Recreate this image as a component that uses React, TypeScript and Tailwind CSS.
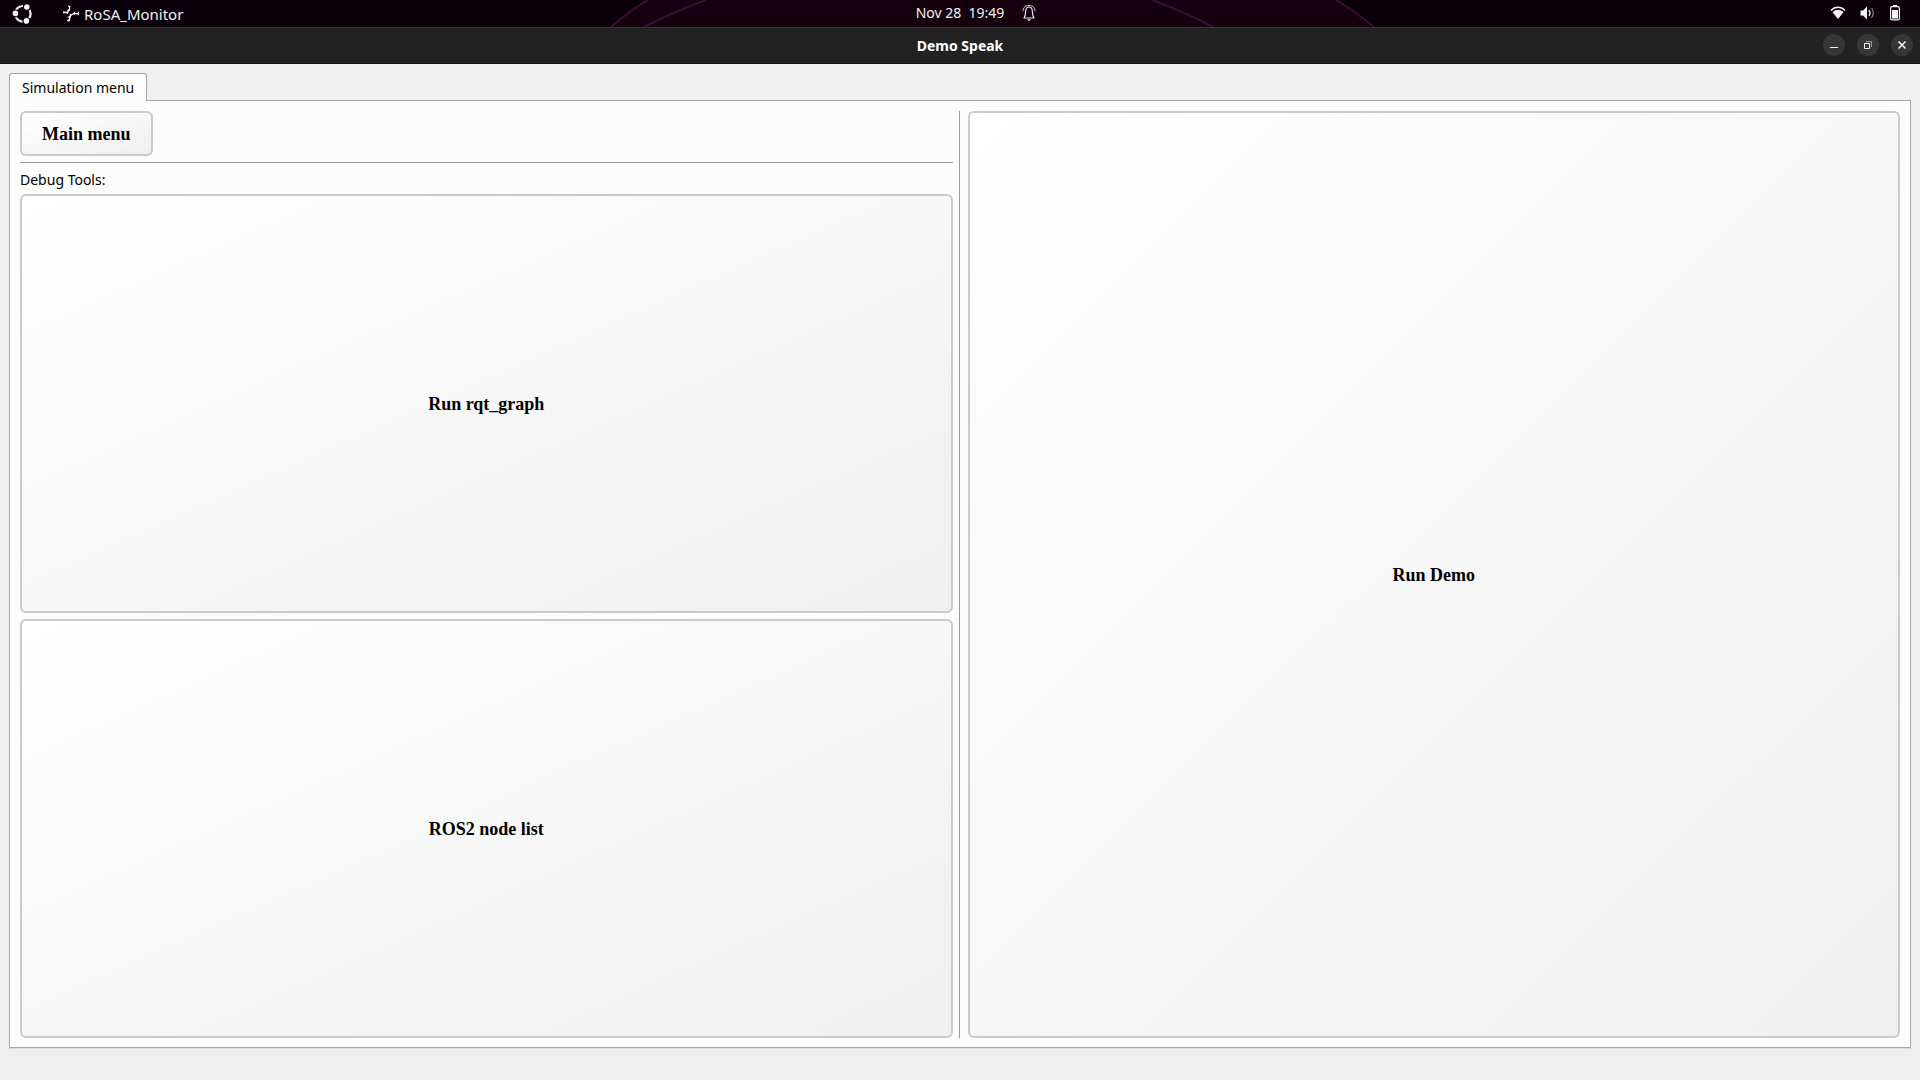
import React from "react";

const UI_FONT = "font-['Noto_Sans',sans-serif]";
const BUTTON =
  "rounded-md border-2 border-[#cacaca] bg-linear-to-br from-white to-[#efefef] font-['Liberation_Serif',serif] text-lg leading-6 font-bold text-black";

function UbuntuLogo() {
  return (
    <svg width="22" height="22" viewBox="0 0 22 22" fill="none" aria-hidden="true">
      <circle cx="10.8" cy="10.8" r="7.8" stroke="#f2f2f2" strokeWidth="2.2" />
      <g fill="#f2f2f2" stroke="#0b0009" strokeWidth="1.2">
        <circle cx="3.4" cy="10.4" r="3.4" />
        <circle cx="14.8" cy="4" r="3.4" />
        <circle cx="14.4" cy="17.9" r="3.4" />
      </g>
    </svg>
  );
}

function MonitorIcon() {
  return (
    <svg width="18" height="18" viewBox="0 0 18 18" fill="none" stroke="#f2f2f2" strokeWidth="1.3" aria-hidden="true">
      <path d="M7.5 1.3V4L6.5 5.3 5.8 7.5 2 7.3M6.5 15.3 7.7 14V12L9.2 9.8 12.2 8.4 16 8.6" />
      <path d="M6.2 1.3H8.4M1.8 6.2V8.4M5 15.7H8M16.3 6.8V10.2" />
      <path d="M5.4 5.4H8M5.6 12.2H9M12.4 6.8V9.8M5.2 6.6V9M8.4 9V11.6" />
    </svg>
  );
}

function BellIcon() {
  return (
    <svg width="14" height="18" viewBox="0 0 14 18" fill="none" stroke="#e8e8e8" aria-hidden="true">
      <path d="M1.5 14H12.5M2 13.8C3.3 12.3 3.5 10.5 3.6 7.7C3.7 4.3 4.7 3 7 3S10.3 4.3 10.4 7.7C10.5 10.5 10.7 12.3 12 13.8" strokeWidth="1.2" />
      <path d="M5 1.7C2.5 2.3 1 4.3 1 7.2M9 1.7C11.5 2.3 13 4.3 13 7.2M5.5 1.5H8.5" strokeWidth="0.9" />
      <path d="M5 15.2H9L7 17.2Z" fill="#e8e8e8" stroke="none" />
    </svg>
  );
}

function WifiIcon() {
  return (
    <svg width="16" height="14" viewBox="0 0 16 14" aria-hidden="true">
      <path d="M1 4.5C5 .3 11 .3 15 4.5" stroke="#f2f2f2" strokeWidth="1.5" fill="none" />
      <path d="M2.5 6.3C5.8 3 10.2 3 13.5 6.3L8 13Z" fill="#f2f2f2" />
    </svg>
  );
}

function VolumeIcon() {
  return (
    <svg width="16" height="14" viewBox="0 0 16 14" fill="none" strokeWidth="1.3" aria-hidden="true">
      <path d="M.5 4.5H3L7 .5V13.5L3 9.5H.5Z" fill="#f2f2f2" />
      <path d="M9 4.2Q11 7 9 9.8" stroke="#f2f2f2" />
      <path d="M11.5 2.2Q15 7 11.5 11.8" stroke="#777" />
    </svg>
  );
}

function BatteryIcon() {
  return (
    <svg width="10" height="16" viewBox="0 0 10 16" aria-hidden="true">
      <path d="M3 0H7V2H3Z" fill="#f2f2f2" />
      <rect x=".6" y="1.7" width="8.8" height="13.2" rx="1.5" fill="none" stroke="#f2f2f2" strokeWidth="1.2" />
      <path d="M2 5H8V13.5H2Z" fill="#f2f2f2" />
    </svg>
  );
}

function WallpaperArcs() {
  return (
    <svg className="absolute left-1/2 top-0 -translate-x-1/2" width="800" height="27" viewBox="560 0 800 27" fill="none" overflow="visible" aria-hidden="true">
      <path d="M648 0Q628 12 611 27H1373Q1354 12 1336 0Z" fill="#14000f" />
      <path d="M648 0Q628 12 611 27M706 0Q673 12 644 27M1152 0Q1185 12 1213 27M1336 0Q1356 12 1374 27" stroke="#3a1036" strokeWidth="2" />
    </svg>
  );
}

function TopBar() {
  return (
    <header className="relative grid h-[27px] grid-cols-[1fr_auto_1fr] items-center overflow-hidden bg-[#0b0009] text-sm text-[#f2f2f2]">
      <WallpaperArcs />
      <div className="relative flex items-center pl-3">
        <button type="button" aria-label="Activities">
          <UbuntuLogo />
        </button>
        <button type="button" className="ml-7 flex items-center gap-1">
          <MonitorIcon />
          <span className="text-[15px] leading-5">RoSA_Monitor</span>
        </button>
      </div>
      <button type="button" className="relative flex items-center gap-[18px] pb-px pl-8">
        <span className="whitespace-pre">Nov 28&nbsp; 19:49</span>
        <BellIcon />
      </button>
      <div className="relative flex items-center justify-end gap-3.5 pr-5 pb-0.5">
        <WifiIcon />
        <VolumeIcon />
        <BatteryIcon />
      </div>
    </header>
  );
}

function WindowButton({ label, children }: { label: string; children: React.ReactNode }) {
  return (
    <button type="button" aria-label={label} className="flex size-[22px] items-center justify-center rounded-full bg-[#373737]">
      <svg width="10" height="10" viewBox="0 0 10 10" fill="none" stroke="#f5f5f5" aria-hidden="true">
        {children}
      </svg>
    </button>
  );
}

function TitleBar() {
  return (
    <div className="grid h-[37px] grid-cols-[1fr_auto_1fr] items-center border-t border-b border-t-[#343434] border-b-[#151515] bg-[#222222] text-white">
      <h1 className="col-start-2 text-sm font-bold">Demo Speak</h1>
      <div className="flex justify-end gap-3 pr-[7px] pb-px">
        <WindowButton label="Minimize">
          <path d="M1 7.5H9" />
        </WindowButton>
        <WindowButton label="Restore">
          <path d="M1.5 3.5H6.5V8.5H1.5Z" />
          <path d="M3 1.5H8.5V7" stroke="#999" />
        </WindowButton>
        <WindowButton label="Close">
          <path d="M1.5 1.5 8.5 8.5M8.5 1.5 1.5 8.5" strokeWidth="1.5" />
        </WindowButton>
      </div>
    </div>
  );
}

export default function App() {
  return (
    <div className={`flex min-h-screen flex-col bg-[#efefef] ${UI_FONT}`}>
      <TopBar />
      <TitleBar />
      <main className="flex flex-1 flex-col px-[9px] pt-[9px] pb-8">
        <div role="tablist" className="z-10 -mb-px flex">
          <button
            type="button"
            role="tab"
            id="simulation-tab"
            aria-selected="true"
            aria-controls="simulation-panel"
            className="h-7 rounded-t-[3px] border border-b-0 border-[#a6a6a6] bg-linear-to-b from-white to-[#fcfcfc] px-3 text-sm text-black"
          >
            Simulation menu
          </button>
        </div>
        <section
          role="tabpanel"
          id="simulation-panel"
          aria-labelledby="simulation-tab"
          className="grid flex-1 grid-cols-[1fr_3px_1fr] gap-1.5 border border-[#a6a6a6] bg-[#fcfcfc] px-2.5 pt-2.5 pb-[9px] shadow-[0_1px_0_#dddddd]"
        >
          <div className="flex flex-col gap-1.5">
            <button type="button" className={`${BUTTON} h-[45px] self-start px-5`}>
              Main menu
            </button>
            <hr className="border-[#999999]" />
            <p className="mt-0.5 text-sm leading-[17px] text-black">Debug Tools:</p>
            <button type="button" className={`${BUTTON} flex-1`}>
              Run rqt_graph
            </button>
            <button type="button" className={`${BUTTON} flex-1`}>
              ROS2 node list
            </button>
          </div>
          <div role="separator" className="w-px bg-[#999999]" />
          <button type="button" className={BUTTON}>
            Run Demo
          </button>
        </section>
      </main>
    </div>
  );
}
